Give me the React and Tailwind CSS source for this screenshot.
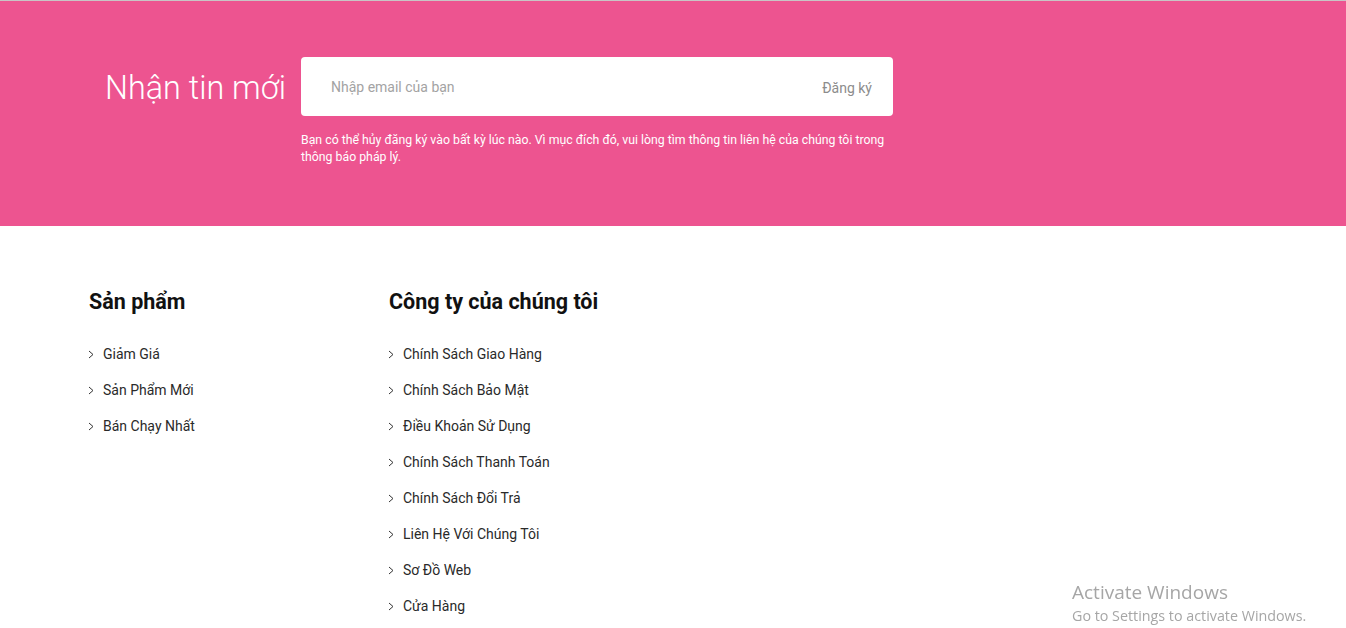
const products = ["Giảm Giá", "Sản Phẩm Mới", "Bán Chạy Nhất"];

const company = [
  "Chính Sách Giao Hàng",
  "Chính Sách Bảo Mật",
  "Điều Khoản Sử Dụng",
  "Chính Sách Thanh Toán",
  "Chính Sách Đổi Trả",
  "Liên Hệ Với Chúng Tôi",
  "Sơ Đồ Web",
  "Cửa Hàng",
];

function Chevron() {
  return (
    <svg width="6" height="9" viewBox="0 0 6 9" className="mr-[9px] shrink-0">
      <polyline points="1,1 5,4.5 1,8" fill="none" stroke="#333" strokeWidth="1" />
    </svg>
  );
}

function LinkList({ title, links }) {
  return (
    <div className="w-[300px] pl-[16px] pr-[15px]">
      <h3 className="text-[21.5px] font-bold leading-[28px] text-[#111]">{title}</h3>
      <ul className="mt-[27px] flex flex-col gap-[14px]">
        {links.map((link) => (
          <li key={link} className="-ml-[1px] flex h-[22px] items-center">
            <Chevron />
            <a href="#" className="text-[14px] leading-[22px] text-[#2a2a2a]">
              {link}
            </a>
          </li>
        ))}
      </ul>
    </div>
  );
}

export default function App() {
  return (
    <div className="min-h-screen bg-white font-['Roboto',sans-serif]">
      <section className="h-[226px] border-t border-[#c9c4c6] bg-[#ed5490]">
        <div className="mx-auto flex w-[1200px] px-[15px] pt-[56px]">
          <div className="flex h-[59px] w-[198px] items-center justify-end">
            <h2 className="mt-[3px] text-[32.3px] font-light text-white">Nhận tin mới</h2>
          </div>
          <div className="ml-[15px] w-[592px]">
            <form className="flex h-[59px] items-center rounded-[4px] bg-white pl-[30px] pr-[21px]">
              <input
                type="email"
                placeholder="Nhập email của bạn"
                className="mt-[2px] flex-1 bg-transparent text-[14px] text-[#555] outline-none placeholder:text-[#a3a3a3]"
              />
              <button type="button" className="mt-[3px] text-[14px] text-[#8c8c8c]">
                Đăng ký
              </button>
            </form>
            <p className="mt-[16px] text-[12.3px] leading-[17px] text-white">
              Bạn có thể hủy đăng ký vào bất kỳ lúc nào. Vì mục đích đó, vui lòng tìm thông tin liên hệ của chúng tôi trong thông báo pháp lý.
            </p>
          </div>
        </div>
      </section>

      <footer className="mx-auto flex w-[1200px] pt-[62px]">
        <LinkList title="Sản phẩm" links={products} />
        <LinkList title="Công ty của chúng tôi" links={company} />
      </footer>

      <div className="pointer-events-none fixed left-[1072px] top-[580px] font-['Open_Sans',sans-serif] text-[#a6a6a6]">
        <div className="text-[19px] leading-[25px]">Activate Windows</div>
        <div className="text-[14.3px] leading-[21px]">Go to Settings to activate Windows.</div>
      </div>
    </div>
  );
}
